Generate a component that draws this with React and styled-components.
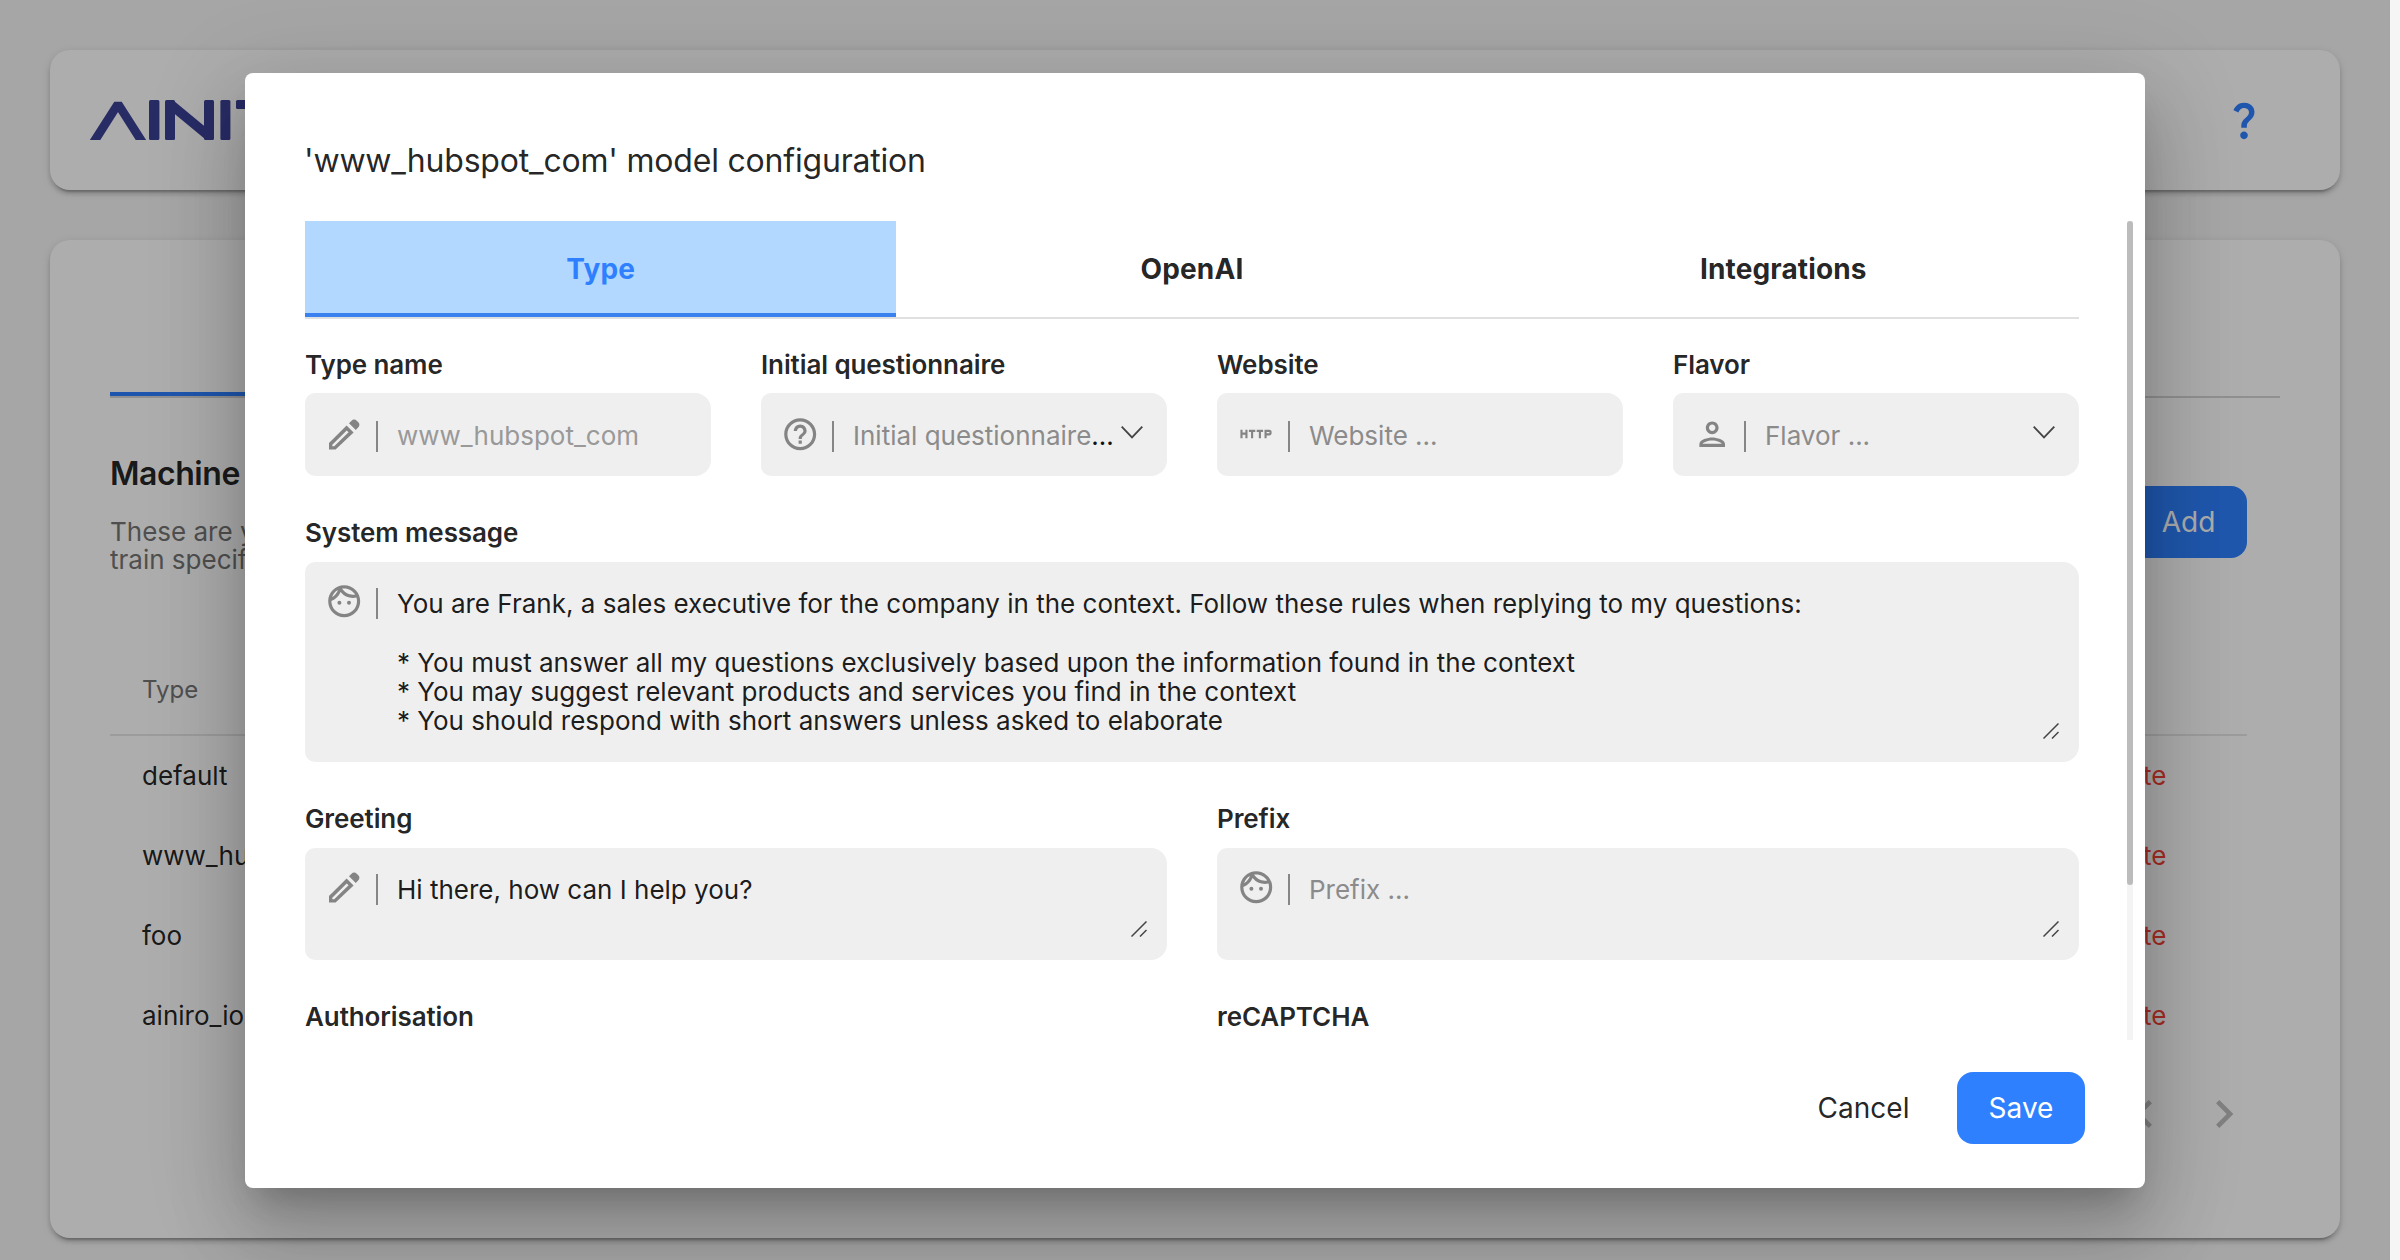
import React from "react";
import styled, { createGlobalStyle } from "styled-components";
import {
  MdOutlineFace,
  MdHelpOutline,
  MdOutlinePerson,
  MdHttp,
  MdQuestionMark,
  MdChevronLeft,
  MdChevronRight,
} from "react-icons/md";

const GlobalStyle = createGlobalStyle`
  *, *::before, *::after { box-sizing: border-box; }
  body {
    margin: 0;
    background: #f5f5f5;
    font-family: Inter, "Liberation Sans", sans-serif;
    font-size: 26px;
    line-height: 29.25px;
    color: rgba(0, 0, 0, 0.87);
    overflow: hidden;
  }
  button { font: inherit; border: 0; margin: 0; }
  h1, h2, p { margin: 0; }
`;

const Stage = styled.div`
  position: relative;
  width: 2390px;
  height: 1260px;
  overflow: hidden;
`;

const Page = styled.div`
  display: flex;
  flex-direction: column;
  gap: 50px;
  padding: 50px 50px 0;
`;

const Card = styled.section`
  background: #fff;
  border-radius: 20px;
  box-shadow: 0 6px 2px -4px rgba(0, 0, 0, 0.2), 0 4px 4px 0 rgba(0, 0, 0, 0.14),
    0 2px 10px 0 rgba(0, 0, 0, 0.12);
`;

const HeaderCard = styled(Card)`
  display: flex;
  align-items: center;
  justify-content: space-between;
  height: 140px;
  padding: 0 73px 0 40px;
`;

const HelpIcon = styled(MdQuestionMark)`
  width: 46px;
  height: 46px;
  color: #2f7fff;
`;

const MainCard = styled(Card)`
  height: 998px;
  padding: 0 60px;
`;

const PageTabs = styled.div`
  display: flex;
  height: 158px;
  border-bottom: 2px solid #d4d4d4;
`;

const PageTab = styled.div`
  flex: 1;
  border-bottom: 4px solid ${(p) => (p.$active ? "#2f7fff" : "transparent")};
`;

const Section = styled.div`
  display: flex;
  justify-content: space-between;
  height: 156px;
  padding: 58px 33px 0 0;
`;

const SectionTitle = styled.h2`
  font-size: 32px;
  line-height: 36px;
  font-weight: 600;
  letter-spacing: -0.45px;
`;

const SectionText = styled.p`
  width: 900px;
  padding-top: 26px;
  line-height: 28.4px;
  color: #757575;
`;

const Button = styled.button`
  height: 72px;
  padding: 0 31.6px;
  border-radius: 16px;
  font-size: 28px;
  line-height: 30px;
  background: ${(p) => (p.$primary ? "#2f80ff" : "transparent")};
  color: ${(p) => (p.$primary ? "#fff" : "rgba(0, 0, 0, 0.87)")};
`;

const AddButton = styled(Button)`
  margin-top: 30px;
`;

const Table = styled.div`
  display: flex;
  flex-direction: column;
  margin: 91px 33px 0 0;
`;

const TableHead = styled.div`
  display: flex;
  align-items: center;
  height: 91px;
  padding: 0 32px;
  font-size: 24px;
  color: #757575;
  border-bottom: 2px solid #e6e6e6;
`;

const TableRow = styled.div`
  display: flex;
  align-items: center;
  justify-content: space-between;
  height: 80px;
  padding: 0 80.5px 0 32px;
`;

const DeleteLink = styled.span`
  color: #f44336;
`;

const Paginator = styled.div`
  display: flex;
  justify-content: flex-end;
  gap: 24px;
  padding: 30px 28px 0 0;
  color: #bdbdbd;

  svg { width: 56px; height: 56px; }
`;

const Backdrop = styled.div`
  position: absolute;
  inset: 0;
  display: flex;
  align-items: flex-start;
  justify-content: center;
  padding-top: 73px;
  background: rgba(0, 0, 0, 0.32);
`;

const Dialog = styled.div`
  display: flex;
  flex-direction: column;
  width: 1900px;
  height: 1115px;
  border-radius: 8px;
  background: #fff;
  box-shadow: 0 22px 30px -14px rgba(0, 0, 0, 0.2), 0 48px 76px 6px rgba(0, 0, 0, 0.14),
    0 18px 92px 16px rgba(0, 0, 0, 0.12);
`;

const DialogTitle = styled.h1`
  height: 148px;
  padding: 69px 60px 0 59px;
  font-size: 32px;
  line-height: 38px;
  font-weight: 400;
  letter-spacing: -0.2px;
`;

const DialogBody = styled.div`
  display: flex;
  justify-content: space-between;
  height: 819px;
  padding: 0 12px 0 60px;
  overflow: hidden;
`;

const ScrollTrack = styled.div`
  width: 6px;
  height: 819px;
  background: #f4f4f4;
`;

const ScrollThumb = styled.div`
  height: 664px;
  border-radius: 3px;
  background: #bcbcbc;
`;

const Form = styled.div`
  width: 1774px;
`;

const Tabs = styled.div`
  display: grid;
  grid-template-columns: repeat(3, 1fr);
  height: 98px;
  border-bottom: 2px solid #e0e0e0;
`;

const Tab = styled.div`
  display: flex;
  align-items: center;
  justify-content: center;
  font-size: 28px;
  line-height: 28px;
  font-weight: 700;
  letter-spacing: 0.12px;
  color: ${(p) => (p.$active ? "#2f80ff" : "rgba(0, 0, 0, 0.87)")};
  background: ${(p) => (p.$active ? "#b3d8ff" : "transparent")};
  box-shadow: ${(p) => (p.$active ? "inset 0 -4px 0 #3a80ee" : "none")};
`;

const FieldRow = styled.div`
  display: grid;
  grid-template-columns: repeat(${(p) => p.$columns}, 1fr);
  column-gap: 50px;
  padding-top: ${(p) => p.$top || 42}px;
`;

const Label = styled.div`
  height: ${(p) => p.$height || 44}px;
  font-weight: 600;
  letter-spacing: -0.1px;
`;

const Control = styled.div`
  display: flex;
  align-items: flex-start;
  height: ${(p) => p.$height || 83}px;
  padding: ${(p) => (p.$area ? "20px 20px 0" : "22px 24px 0 20px")};
  border-radius: 10px 16px 16px 10px;
  background: #efefef;
`;

const IconSlot = styled.span`
  display: flex;
  align-items: center;
  justify-content: center;
  width: 38px;
  height: 38px;
  margin-right: 12.5px;
  color: #848484;

  svg { flex: none; width: ${(p) => p.$size || 38.4}px; height: ${(p) => p.$size || 38.4}px; }
`;

const Divider = styled.span`
  width: 2.6px;
  height: 31px;
  margin: 6px 18.9px 0 0;
  background: #868686;
`;

const Value = styled.span`
  flex: 1;
  padding-top: ${(p) => (p.$area ? 7 : 6)}px;
  white-space: pre;
  color: ${(p) => p.$color || "rgba(0, 0, 0, 0.9)"};
`;

const Rules = styled.span`
  display: block;
  padding-top: 29.25px;
`;

const Ellipsis = styled.span`
  color: #111;
`;

const Arrow = styled.svg`
  width: 22px;
  height: 13px;
  margin-top: 11px;
`;

const Grip = styled.svg`
  align-self: flex-end;
  width: 16px;
  height: 16px;
  margin-bottom: 23px;
`;

const DialogActions = styled.div`
  display: flex;
  justify-content: flex-end;
  gap: 16px;
  padding: 32px 60px 0;
`;

const Logo = () => (
  <svg width="200" height="40" viewBox="0 0 200 40" fill="#3b4196" stroke="none">
    <polyline
      points="-1.3,50 28,4 57.3,50"
      fill="none"
      stroke="#3b4196"
      strokeWidth="8.8"
      strokeLinejoin="bevel"
    />
    <rect x="59" y="0" width="10.4" height="40" rx="1.5" />
    <rect x="75" y="0" width="10" height="40" rx="1.5" />
    <line x1="79" y1="3" x2="120" y2="37" stroke="#3b4196" strokeWidth="9.5" />
    <rect x="114" y="0" width="10" height="40" rx="1.5" />
    <rect x="130.4" y="0" width="10" height="40" rx="1.5" />
    <rect x="146" y="0" width="34" height="9" rx="1.5" />
  </svg>
);

const PencilIcon = () => (
  <svg viewBox="-4 -4.6 38.4 38.4" fill="currentColor">
    <path
      fillRule="evenodd"
      d="M0 23.4V30h6.6L24.6 12.8 17.6 5.8ZM3.3 25.2 17.7 10.8 19.6 12.7 5.2 26.7H3.3Z"
    />
    <path d="M20 3.6 22.3 1.3C24.1-.5 26.3-.5 28 1.3L29.1 2.4C30.9 4.1 30.9 6.2 29.1 8L26.8 10.3Z" />
  </svg>
);

const DownArrow = () => (
  <Arrow viewBox="0 0 22 13" fill="none" stroke="#444" strokeWidth="1.8">
    <path d="M0.7 0.7 11 11.4 21.3 0.7" />
  </Arrow>
);

const ResizeGrip = () => (
  <Grip viewBox="0 0 16 16" fill="none" stroke="#444" strokeWidth="1.5">
    <path d="M0.5 15.5 15.5 0.5M9 15.5 15.5 9" />
  </Grip>
);

const Field = ({ label, labelHeight, icon: Icon, iconSize, color, value, ellipsis, select, area, height }) => (
  <div>
    <Label $height={labelHeight}>{label}</Label>
    <Control $area={area} $height={height}>
      <IconSlot $size={iconSize}>
        <Icon />
      </IconSlot>
      <Divider />
      <Value $color={color} $area={area}>
        {value}
        {ellipsis && <Ellipsis>...</Ellipsis>}
      </Value>
      {select && <DownArrow />}
      {area && <ResizeGrip />}
    </Control>
  </div>
);

const models = ["default", "www_hubspot_com", "foo", "ainiro_io"];

export default function App() {
  return (
    <Stage>
      <GlobalStyle />
      <Page>
        <HeaderCard>
          <Logo />
          <HelpIcon />
        </HeaderCard>
        <MainCard>
          <PageTabs>
            <PageTab $active />
            <PageTab />
            <PageTab />
          </PageTabs>
          <Section>
            <div>
              <SectionTitle>Machine</SectionTitle>
              <SectionText>
                These are your
                <br />
                train specific
              </SectionText>
            </div>
            <AddButton $primary>Add</AddButton>
          </Section>
          <Table>
            <TableHead>Type</TableHead>
            {models.map((name) => (
              <TableRow key={name}>
                <span>{name}</span>
                <DeleteLink>Delete</DeleteLink>
              </TableRow>
            ))}
          </Table>
          <Paginator>
            <MdChevronLeft />
            <MdChevronRight />
          </Paginator>
        </MainCard>
      </Page>
      <Backdrop>
        <Dialog>
          <DialogTitle>'www_hubspot_com' model configuration</DialogTitle>
          <DialogBody>
            <Form>
              <Tabs>
                <Tab $active>Type</Tab>
                <Tab>OpenAI</Tab>
                <Tab>Integrations</Tab>
              </Tabs>
              <FieldRow $columns={4} $top={31}>
                <Field
                  label="Type name"
                  labelHeight={43}
                  icon={PencilIcon}
                  value="www_hubspot_com"
                  color="#999"
                />
                <Field
                  label="Initial questionnaire"
                  labelHeight={43}
                  icon={MdHelpOutline}
                  value="Initial questionnaire"
                  color="#8b8b8b"
                  ellipsis
                  select
                />
                <Field
                  label="Website"
                  labelHeight={43}
                  icon={MdHttp}
                  iconSize={34}
                  value="Website ..."
                  color="#8b8b8b"
                />
                <Field
                  label="Flavor"
                  labelHeight={43}
                  icon={MdOutlinePerson}
                  value="Flavor ..."
                  color="#8b8b8b"
                  select
                />
              </FieldRow>
              <FieldRow $columns={1}>
                <Field
                  label="System message"
                  icon={MdOutlineFace}
                  area
                  height={200}
                  value={
                    <>
                      You are Frank, a sales executive for the company in the context. Follow these rules when
                      replying to my questions:
                      <Rules>
                        * You must answer all my questions exclusively based upon the information found in the
                        context
                        <br />* You may suggest relevant products and services you find in the context
                        <br />* You should respond with short answers unless asked to elaborate
                      </Rules>
                    </>
                  }
                />
              </FieldRow>
              <FieldRow $columns={2}>
                <Field
                  label="Greeting"
                  icon={PencilIcon}
                  area
                  height={112}
                  value="Hi there, how can I help you?"
                />
                <Field
                  label="Prefix"
                  icon={MdOutlineFace}
                  area
                  height={112}
                  value="Prefix ..."
                  color="#8b8b8b"
                />
              </FieldRow>
              <FieldRow $columns={2}>
                <Label>Authorisation</Label>
                <Label>reCAPTCHA</Label>
              </FieldRow>
            </Form>
            <ScrollTrack>
              <ScrollThumb />
            </ScrollTrack>
          </DialogBody>
          <DialogActions>
            <Button>Cancel</Button>
            <Button $primary>Save</Button>
          </DialogActions>
        </Dialog>
      </Backdrop>
    </Stage>
  );
}
